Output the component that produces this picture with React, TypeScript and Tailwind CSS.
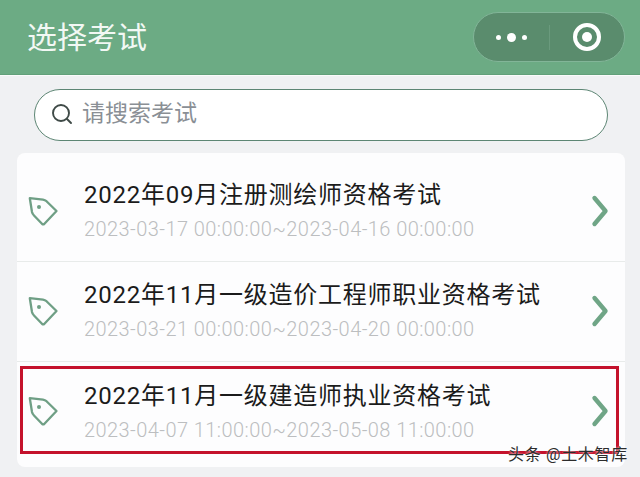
import React from 'react';

const exams = [
    { title: '2022年09月注册测绘师资格考试', time: '2023-03-17 00:00:00~2023-04-16 00:00:00' },
    { title: '2022年11月一级造价工程师职业资格考试', time: '2023-03-21 00:00:00~2023-04-20 00:00:00' },
    { title: '2022年11月一级建造师执业资格考试', time: '2023-04-07 11:00:00~2023-05-08 11:00:00' },
];

const TagIcon = () => (
    <svg width="32" height="32" viewBox="0 0 32 32" fill="none" className="shrink-0">
        <path d="M1.8 3.2 L15 4.6 Q17 5 18.5 6.2 L28.5 16 L16.2 29 Q15.2 29.8 14.2 29 L6 20.5 Q4.4 19 4 17 Z" stroke="#6f9f85" strokeWidth="2.3" strokeLinejoin="round" />
        <circle cx="11" cy="12" r="2" fill="#6f9f85" />
    </svg>
);

const Chevron = () => (
    <svg width="20" height="34" viewBox="0 0 20 34" fill="none" className="shrink-0">
        <path d="M3.5 4 L14.5 17 L3.5 30" stroke="#6fa586" strokeWidth="4.4" strokeLinecap="round" strokeLinejoin="round" />
    </svg>
);

export default function App() {
    return (
        <div className="relative w-[640px] h-[477px] overflow-hidden bg-[#f0f1f3] font-['Roboto','Noto_Sans_CJK_SC',sans-serif]">
            <header className="h-[75px] bg-[#6cab84] flex items-center justify-between pl-[27px] pr-[15px] border-b border-[#62a07a]">
                <h1 className="text-[30px] leading-none text-[#f2f8f4] mt-[1px]">选择考试</h1>
                <div className="w-[152px] h-[50px] rounded-full bg-[#5a8c6d] border border-[#82b598] flex items-center">
                    <div className="w-[75px] flex items-center justify-center gap-[6px]">
                        <span className="w-[5px] h-[5px] rounded-full bg-white" />
                        <span className="w-[9px] h-[9px] rounded-full bg-white" />
                        <span className="w-[5px] h-[5px] rounded-full bg-white" />
                    </div>
                    <div className="w-px h-[25px] bg-[#6a9a7d]" />
                    <div className="flex-1 flex items-center justify-center">
                        <div className="w-[28px] h-[28px] rounded-full border-[4px] border-white flex items-center justify-center">
                            <span className="w-[10px] h-[10px] rounded-full bg-white" />
                        </div>
                    </div>
                </div>
            </header>
            <div className="h-px bg-[#fafbfb]" />

            <div className="pl-[34px] pr-[32px] pt-[13px]">
                <div className="h-[52px] rounded-full bg-white border border-[#5d8674] flex items-center pl-[16px] gap-[9px]">
                    <svg width="22" height="22" viewBox="0 0 22 22" fill="none" className="shrink-0 -mt-[3px]">
                        <circle cx="10" cy="10" r="8" stroke="#3f4a47" strokeWidth="1.9" />
                        <path d="M16 16 L20 20" stroke="#3f4a47" strokeWidth="1.9" strokeLinecap="round" />
                    </svg>
                    <span className="text-[23px] leading-none text-[#8a8f95] -mt-[4px]">请搜索考试</span>
                </div>
            </div>

            <div className="mt-[12px] ml-[17px] w-[608px] h-[314px] pt-[9px] rounded-[8px] bg-[#fdfdfe] flex flex-col">
                {exams.map((exam, i) => (
                    <div
                        key={exam.title}
                        className={`flex items-center pl-[11px] pr-[14px] pb-[2px] h-[100px] ${i < 2 ? 'border-b border-[#e8ebea]' : ''}`}
                    >
                        <TagIcon />
                        <div className="ml-[24px] flex-1 min-w-0">
                            <div className="text-[24px] leading-[32px] tracking-[0.75px] text-[#1b1b1b] whitespace-nowrap">{exam.title}</div>
                            <div className="text-[20px] leading-[26px] mt-[5px] font-light tracking-[0.43px] text-[#bcbec0] whitespace-nowrap">{exam.time}</div>
                        </div>
                        <Chevron />
                    </div>
                ))}
            </div>

            <div className="absolute left-[20px] top-[366px] w-[599px] h-[88px] border-[3px] border-[#c4122c]" />
            <div className="absolute left-[508px] top-[445px] text-[16px] leading-[20px] tracking-[0.7px] text-[#2c2c2c] [text-shadow:0_0_2px_#ffffff]">头条 @土木智库</div>
        </div>
    );
}
